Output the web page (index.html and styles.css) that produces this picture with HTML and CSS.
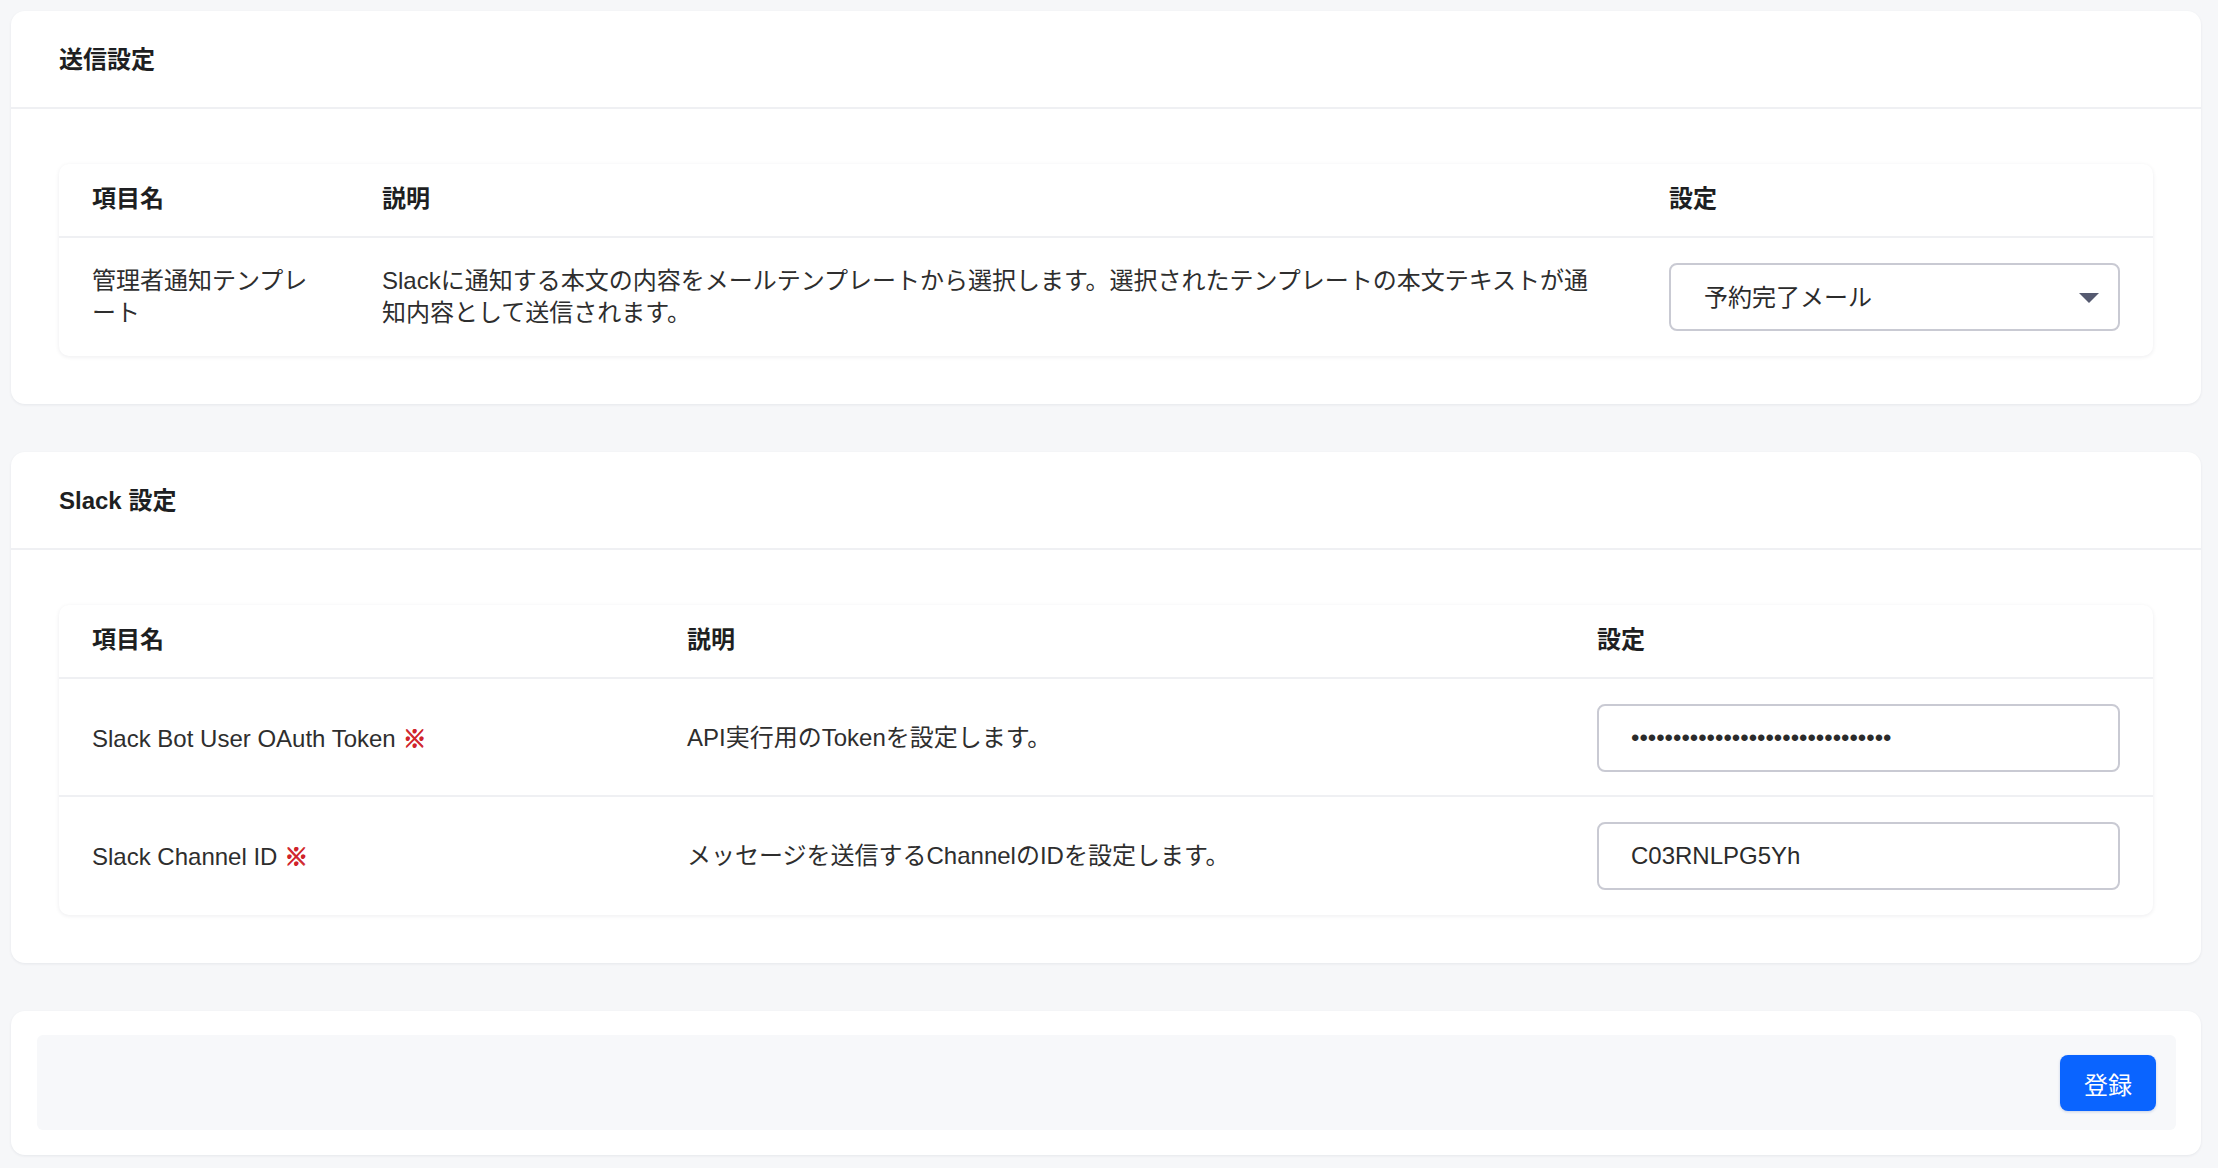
FILE: index.html
```html
<!DOCTYPE html>
<html lang="ja">
<head>
  <meta charset="UTF-8" />
  <meta name="viewport" content="width=device-width, initial-scale=1.0"/>
  <title>Slack 通知設定</title>
  <link rel="stylesheet" href="styles.css">
</head>
<body>

<div class="page">

  <section class="card">
    <div class="card-head">
      <h2>送信設定</h2>
    </div>
    <div class="card-body">
      <div class="table-box">
        <table class="settings">
          <colgroup>
            <col class="c-send-name">
            <col class="c-send-desc">
            <col class="c-send-val">
          </colgroup>
          <thead>
            <tr><th>項目名</th><th>説明</th><th>設定</th></tr>
          </thead>
          <tbody>
            <tr>
              <td>管理者通知テンプレート</td>
              <td>Slackに通知する本文の内容をメールテンプレートから選択します。選択されたテンプレートの本文テキストが通知内容として送信されます。</td>
              <td>
                <div class="select-wrap">
                  <select class="field" id="template">
                    <option>予約完了メール</option>
                    <option>予約変更メール</option>
                    <option>予約キャンセルメール</option>
                  </select>
                  <svg class="caret" width="20" height="10" viewBox="0 0 20 10"><path d="M0 0 H20 L10 10 Z" fill="#555a70"/></svg>
                </div>
              </td>
            </tr>
          </tbody>
        </table>
      </div>
    </div>
  </section>

  <section class="card">
    <div class="card-head">
      <h2>Slack 設定</h2>
    </div>
    <div class="card-body">
      <div class="table-box">
        <table class="settings">
          <colgroup>
            <col class="c-slack-name">
            <col class="c-slack-desc">
            <col class="c-slack-val">
          </colgroup>
          <thead>
            <tr><th>項目名</th><th>説明</th><th>設定</th></tr>
          </thead>
          <tbody>
            <tr>
              <td>Slack Bot User OAuth Token <span class="req">※</span></td>
              <td>API実行用のTokenを設定します。</td>
              <td><input class="field" type="password" value="xoxb-3829104756-1029384756abcde"/></td>
            </tr>
            <tr>
              <td>Slack Channel ID <span class="req">※</span></td>
              <td>メッセージを送信するChannelのIDを設定します。</td>
              <td><input class="field" type="text" value="C03RNLPG5Yh"/></td>
            </tr>
          </tbody>
        </table>
      </div>
    </div>
  </section>

  <section class="card card-actions">
    <div class="actions">
      <button type="button">登録</button>
    </div>
  </section>

</div>

</body>
</html>
```

FILE: styles.css
```css
body {
  margin: 0;
  padding: 0;
  background-color: #f6f7f9;
  color: #2e2e2e;
  font-family: "Liberation Sans", "Noto Sans CJK JP", sans-serif;
  font-size: 24px;
  line-height: 32px;
}
.page {
  padding: 11px 17px 11px 11px;
  display: flex;
  flex-direction: column;
  gap: 48px;
}
.card {
  background: #fff;
  border-radius: 14px;
  box-shadow: 0 1px 3px rgba(20, 30, 50, 0.07);
}
.card-head {
  height: 96px;
  padding: 0 48px;
  display: flex;
  align-items: center;
  border-bottom: 2px solid #eff0f3;
}
.card-head h2 {
  margin: 2px 0 0;
  font-size: 24px;
  font-weight: 700;
  color: #1e1f22;
}
.card-body {
  padding: 55px 48px 48px;
}
.table-box {
  border-radius: 10px;
  box-shadow: 0 1px 4px rgba(20, 30, 50, 0.08);
  overflow: hidden;
}
.settings {
  width: 100%;
  border-collapse: collapse;
  table-layout: fixed;
}
.c-send-name { width: 290px; }
.c-send-desc { width: 1287px; }
.c-slack-name { width: 595px; }
.c-slack-desc { width: 910px; }
.settings th {
  text-align: left;
  font-weight: 700;
  color: #1e1f22;
  padding: 19px 33px 21px;
  border-bottom: 2px solid #eff0f3;
}
.settings td {
  padding: 25px 33px 23px;
  vertical-align: middle;
  border-bottom: 2px solid #eff0f3;
}
.settings tbody tr:last-child td {
  border-bottom: none;
  padding-bottom: 25px;
}
.req {
  color: #d0232a;
  font-family: "Noto Sans CJK JP", sans-serif;
  font-weight: 700;
  font-size: 24px;
  text-shadow: 0.6px 0 0 #d0232a, 0 0.6px 0 #d0232a;
}
.field {
  display: block;
  box-sizing: border-box;
  width: 100%;
  height: 68px;
  margin: 0;
  padding: 0 32px;
  border: 2px solid #c9cad3;
  border-radius: 8px;
  background: #fff;
  color: #2b2b2b;
  font-family: "Liberation Sans", "Noto Sans CJK JP", sans-serif;
  font-size: 24px;
  outline: none;
}
.select-wrap {
  position: relative;
}
select.field {
  -webkit-appearance: none;
  appearance: none;
  padding-left: 33px;
}
.caret {
  position: absolute;
  right: 21px;
  top: 30px;
  pointer-events: none;
}
.card-actions {
  padding: 24px 25px 25px 26px;
}
.actions {
  background: #f7f8fa;
  border-radius: 6px;
  padding: 20px 20px 19px;
  display: flex;
  justify-content: flex-end;
}
button {
  width: 96px;
  height: 56px;
  border: none;
  border-radius: 8px;
  background: #0a64ff;
  color: #fff;
  font-family: "Liberation Sans", "Noto Sans CJK JP", sans-serif;
  font-size: 24px;
  cursor: pointer;
  box-shadow: 0 1px 3px rgba(10, 60, 160, 0.2);
}
```
